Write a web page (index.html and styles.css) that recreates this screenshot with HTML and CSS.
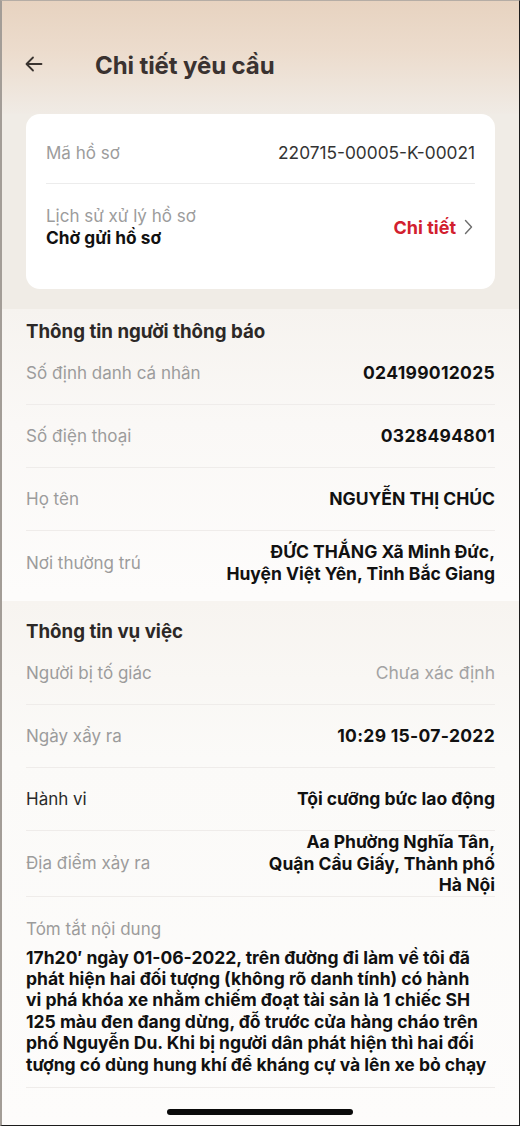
FILE: index.html
```html
<!DOCTYPE html>
<html lang="vi">
<head>
<meta charset="utf-8">
<title>Chi tiết yêu cầu</title>
<link rel="stylesheet" href="styles.css">
</head>
<body>
<div class="screen">
  <header class="header">
    <button class="back" aria-label="Quay lại">
      <svg width="18" height="16" viewBox="0 0 18 16" fill="none" stroke="#3a3430" stroke-width="1.8" stroke-linecap="round" stroke-linejoin="round"><path d="M16.5 8H2"/><path d="M8 1.5L1.5 8L8 14.5"/></svg>
    </button>
    <h1 class="title">Chi tiết yêu cầu</h1>
  </header>

  <div class="card-wrap">
    <div class="card">
      <div class="card-row first">
        <span class="label">Mã hồ sơ</span>
        <span class="code">220715-00005-K-00021</span>
      </div>
      <div class="card-row second">
        <div class="history">
          <span class="label">Lịch sử xử lý hồ sơ</span>
          <span class="status">Chờ gửi hồ sơ</span>
        </div>
        <a class="detail-link">Chi tiết
          <svg width="9" height="16" viewBox="0 0 9 16" fill="none" stroke="#6d6d6d" stroke-width="1.4" stroke-linecap="round" stroke-linejoin="round"><path d="M1.5 1.5L7.5 8L1.5 14.5"/></svg>
        </a>
      </div>
    </div>
  </div>

  <section class="section s1">
    <h2 class="section-title">Thông tin người thông báo</h2>
    <div class="row"><span class="label">Số định danh cá nhân</span><span class="value num">024199012025</span></div>
    <div class="row"><span class="label">Số điện thoại</span><span class="value num">0328494801</span></div>
    <div class="row"><span class="label">Họ tên</span><span class="value">NGUYỄN THỊ CHÚC</span></div>
    <div class="row last"><span class="label">Nơi thường trú</span><span class="value">ĐỨC THẮNG Xã Minh Đức,<br>Huyện Việt Yên, Tỉnh Bắc Giang</span></div>
  </section>

  <section class="section s2">
    <h2 class="section-title">Thông tin vụ việc</h2>
    <div class="row"><span class="label">Người bị tố giác</span><span class="value muted">Chưa xác định</span></div>
    <div class="row"><span class="label">Ngày xẩy ra</span><span class="value num">10:29 15-07-2022</span></div>
    <div class="row"><span class="label dark">Hành vi</span><span class="value">Tội cưỡng bức lao động</span></div>
    <div class="row"><span class="label">Địa điểm xảy ra</span><span class="value">Aa Phường Nghĩa Tân,<br>Quận Cầu Giấy, Thành phố<br>Hà Nội</span></div>
    <div class="summary">
      <span class="label">Tóm tắt nội dung</span>
      <p class="summary-text">17h20′ ngày 01-06-2022, trên đường đi làm về tôi đã phát hiện hai đối tượng (không rõ danh tính) có hành vi phá khóa xe nhằm chiếm đoạt tài sản là 1 chiếc SH 125 màu đen đang dừng, đỗ trước cửa hàng cháo trên phố Nguyễn Du. Khi bị người dân phát hiện thì hai đối tượng có dùng hung khí để kháng cự và lên xe bỏ chạy</p>
    </div>
  </section>

  <div class="home-indicator"></div>
</div>
</body>
</html>
```

FILE: styles.css
```css
* { box-sizing: border-box; }

html, body {
  margin: 0;
  padding: 0;
}

body {
  width: 520px;
  height: 1126px;
  overflow: hidden;
  font-family: "Inter", "Noto Sans", "Liberation Sans", sans-serif;
  color: #111;
  background: #fdfcfb;
}

.screen {
  position: relative;
  width: 520px;
  height: 1126px;
  display: flex;
  flex-direction: column;
  background: #fdfcfb;
  border-left: 2px solid #a39d97;
  border-right: 1px solid #1c1c1c;
  border-bottom: 1px solid #1c1c1c;
  border-top: 1px solid #b5ada5;
  overflow: hidden;
}

.header {
  height: 113px;
  display: flex;
  align-items: center;
  padding: 16px 0 0 22px;
  background: linear-gradient(180deg, #e7d3c0 0%, #ecdccd 45%, #f0ebe5 100%);
}

.back {
  width: 20px;
  height: 20px;
  padding: 0;
  margin: -3px 0 0 0;
  border: 0;
  background: none;
  display: flex;
  align-items: center;
  justify-content: center;
}

.title {
  margin: 0 0 0 51px;
  font-size: 24px;
  font-weight: 700;
  color: #3a3230;
  letter-spacing: -0.1px;
}

.card-wrap {
  background: #f0ece6;
  padding: 0 24px 20px 24px;
}

.card {
  background: #fff;
  border-radius: 14px;
  padding: 0 20px;
}

.card-row.first {
  display: flex;
  justify-content: space-between;
  align-items: center;
  padding: 26px 0 17px;
  line-height: 26px;
  border-bottom: 1px solid #ececec;
}

.card-row.second {
  display: flex;
  justify-content: space-between;
  align-items: center;
  padding: 22px 0 41px;
}

.history {
  display: flex;
  flex-direction: column;
  line-height: 21px;
}

.label {
  font-size: 17px;
  color: #9c9c9c;
  font-weight: 400;
}

.label.dark { color: #2a2a2a; }

.code {
  font-size: 17.3px;
  color: #333;
}

.status {
  font-size: 17.3px;
  font-weight: 700;
  color: #111;
}

.detail-link {
  display: flex;
  align-items: center;
  gap: 8px;
  color: #d2202e;
  font-weight: 700;
  font-size: 18px;
  margin-right: 2px;
}

.section {
  padding: 0 24px;
}

.s1 {
  background: linear-gradient(180deg, #f6f3ef 0%, #faf8f6 40%, #fdfcfb 100%);
  padding-top: 13px;
}

.s2 {
  margin-top: 7px;
  padding-top: 21px;
  background: linear-gradient(180deg, #f7f4f0 0%, #fbfaf8 30%, #fdfcfb 100%);
  flex: 1;
}

.section-title {
  margin: 0;
  font-size: 18.7px;
  font-weight: 700;
  color: #2c2826;
  line-height: 20px;
}

.row {
  display: flex;
  justify-content: space-between;
  align-items: center;
  min-height: 63px;
  border-bottom: 1px solid #efecea;
  gap: 16px;
}

.row.last { border-bottom: 0; }

.value {
  text-align: right;
  font-size: 17.5px;
  font-weight: 700;
  line-height: 21.5px;
  color: #111;
}

.value.num { letter-spacing: 0.3px; }

.value.muted {
  font-weight: 400;
  color: #a3a3a3;
}

.summary {
  padding-top: 22px;
  padding-bottom: 12px;
  border-bottom: 1px solid #efecea;
}

.summary-text {
  margin: 8px 0 0;
  max-width: 461px;
  font-size: 17.5px;
  font-weight: 700;
  line-height: 21.4px;
  color: #111;
}

.home-indicator {
  position: absolute;
  left: 165px;
  bottom: 10px;
  width: 186px;
  height: 6px;
  border-radius: 3px;
  background: #0a0a0a;
}
```
